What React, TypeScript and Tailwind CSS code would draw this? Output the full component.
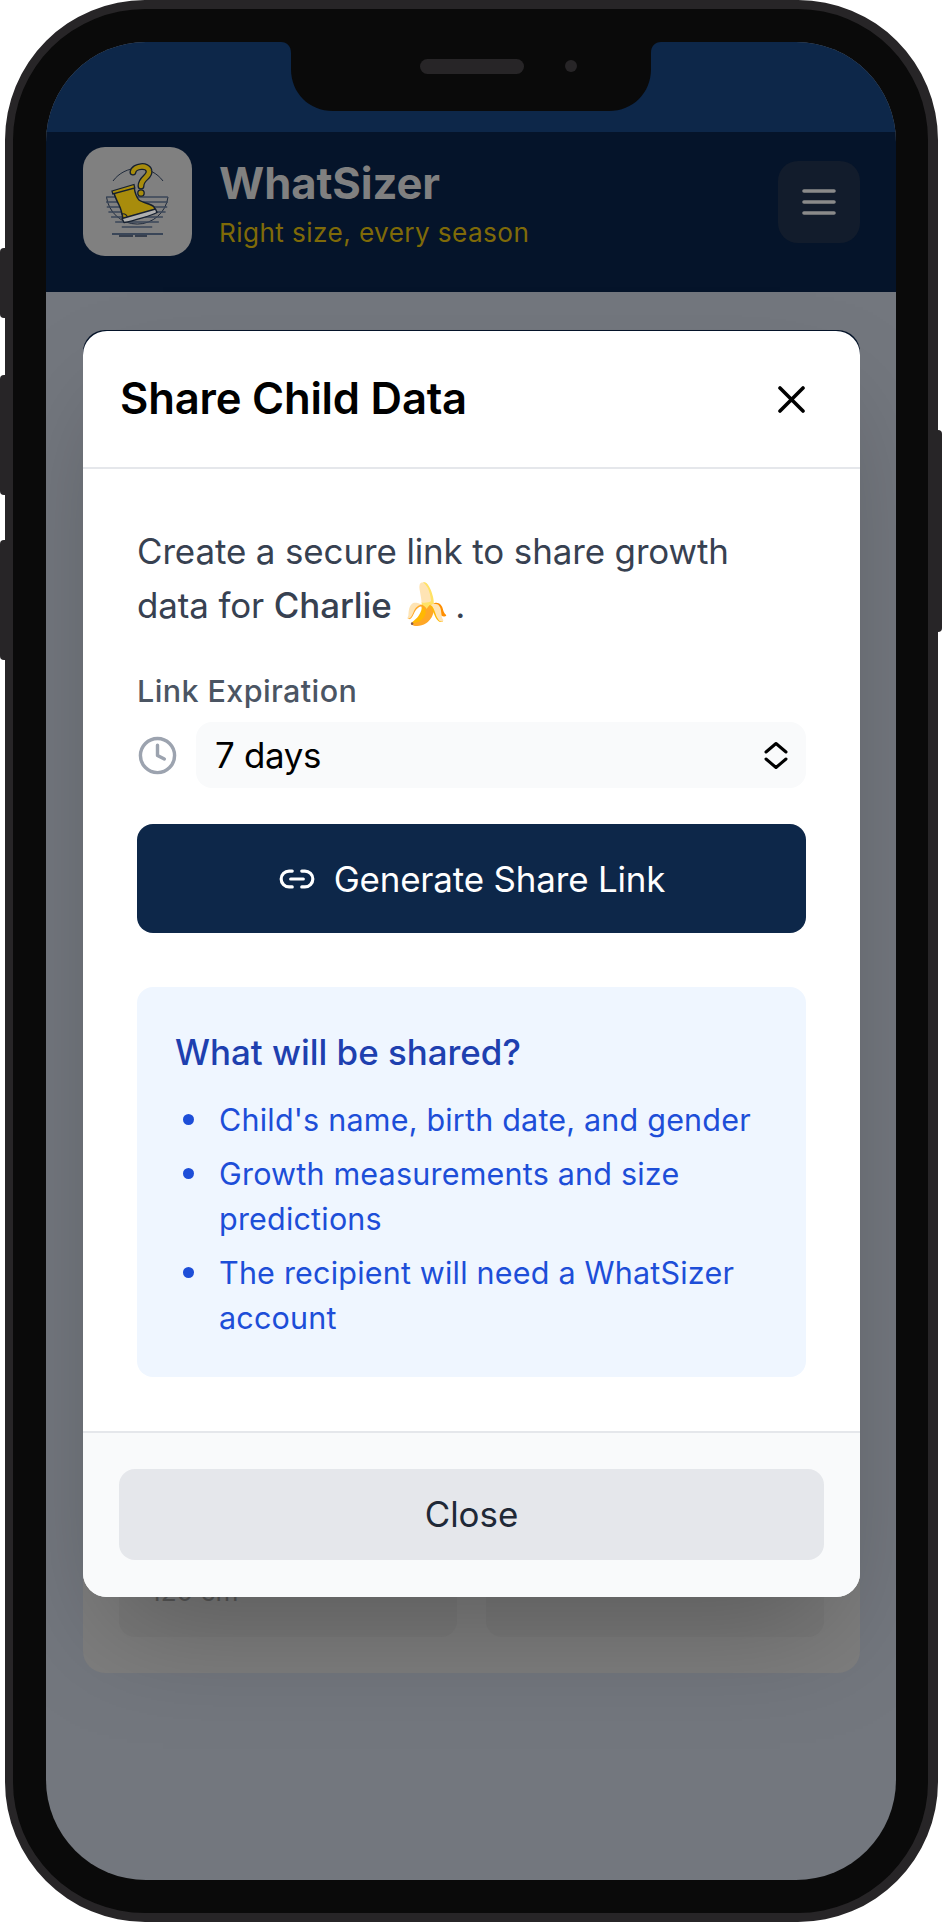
import React from 'react';
import { Clock, Link2 } from 'lucide-react';

const BootLogo = () => (
  <svg viewBox="0 0 109 109" className="w-[109px] h-[109px]" fill="none">
    <path d="M30 34A31 31 0 0 1 80 34" stroke="#1f2a3c" strokeWidth="1" />
    <path d="M23.5 50A31 31 0 0 0 85 50" stroke="#1f2a3c" strokeWidth="1" />
    {[50, 55, 60, 65, 70, 75, 80].map(y => {
      const half = Math.sqrt(Math.max(31 * 31 - (y - 53) * (y - 53), 0));
      return <path key={y} d={`M${54 - half} ${y}H${54 + half}`} stroke="#3a4658" strokeWidth="1.6" />;
    })}
    <path d="M29 87h51" stroke="#3a4658" strokeWidth="2" />
    <path d="M36 89h14M52 89h12" stroke="#1f2a3c" strokeWidth="1.4" />
    <path
      d="M31 46L51 40C52 46 53 50 56 53C60 56 69 57 71 60C72 61 72 62 72 63L40 72C39 66 38 62 36 58C34 54 32 50 31 46Z"
      fill="#a88c0c"
      stroke="#16202f"
      strokeWidth="1.5"
      strokeLinejoin="round"
    />
    <path d="M29 44l22-6.500 .8 3.500-22 6z" fill="#a88c0c" stroke="#16202f" strokeWidth="1.3" />
    <path d="M38 67c4-1 6 1 7 4" stroke="#16202f" strokeWidth="1.2" />
    <path d="M39 71.500L72.500 62L74 65.500C70 68 50 74 41 75.500Z" fill="#b0b0b0" stroke="#16202f" strokeWidth="1.4" strokeLinejoin="round" />
    <path d="M50 25c1-6 15-8 16-1 1 6-8 7-8 15" stroke="#16202f" strokeWidth="7" strokeLinecap="round" />
    <path d="M50 25c1-6 15-8 16-1 1 6-8 7-8 15" stroke="#a88c0c" strokeWidth="4.4" strokeLinecap="round" />
    <circle cx="58" cy="46" r="3.2" fill="#a88c0c" stroke="#16202f" strokeWidth="1.3" />
  </svg>
);

const Hamburger = () => (
  <svg viewBox="0 0 34 26" className="w-[34px] h-[26px]" fill="none" stroke="#8a8a8a" strokeWidth="3.6" strokeLinecap="round">
    <path d="M2 2h30M2 13h30M2 24h30" />
  </svg>
);

const Notch = () => (
  <svg viewBox="0 0 380 69" className="absolute left-[268px] top-[33px] w-[380px] h-[69px]">
    <path d="M0 0C6 0 10 4 10 11V27C10 51 28 69 52 69H328C352 69 370 51 370 27V11C370 4 374 0 380 0Z" fill="#0a0a0a" />
    <rect x="139" y="17" width="104" height="15" rx="7.5" fill="#272527" />
    <circle cx="290" cy="24" r="6" fill="#272527" />
  </svg>
);

const shared = [
  "Child's name, birth date, and gender",
  'Growth measurements and size predictions',
  'The recipient will need a WhatSizer account',
];

export default function App() {
  return (
    <div className="relative w-[942px] h-[1923px] bg-white font-['Inter',sans-serif] overflow-hidden">
      <div className="absolute left-0 top-[248px] w-[8px] h-[70px] rounded-l-[4px] bg-[#272527]" />
      <div className="absolute left-0 top-[375px] w-[8px] h-[120px] rounded-l-[4px] bg-[#272527]" />
      <div className="absolute left-0 top-[540px] w-[8px] h-[120px] rounded-l-[4px] bg-[#272527]" />
      <div className="absolute right-0 top-[430px] w-[8px] h-[202px] rounded-r-[4px] bg-[#272527]" />

      <div className="relative ml-[5px] w-[933px] h-[1922px] rounded-[140px] border-l-[8px] border-r-[10px] border-y-[9px] border-[#272527] bg-[#0a0a0a] pl-[33px] pr-[32px] py-[33px]">
        <div className="relative h-full rounded-[100px] overflow-hidden flex flex-col bg-[#73777e]">
          <div className="h-[90px] shrink-0 bg-[#0d2749]" />
          <header className="h-[160px] shrink-0 bg-[#05142a] flex items-center justify-between pl-[37px] pr-[36px] pb-[21px]">
            <div className="flex items-center gap-[27px]">
              <div className="w-[109px] h-[109px] rounded-[22px] bg-[#808080] overflow-hidden">
                <BootLogo />
              </div>
              <div className="mt-[5px]">
                <div className="text-[43.6px] leading-[50px] font-bold tracking-[-0.1px] text-[#808080]">WhatSizer</div>
                <div className="text-[26.2px] leading-[32px] tracking-[0.4px] text-[#7f6a08] mt-[8px]">Right size, every season</div>
              </div>
            </div>
            <button className="w-[82px] h-[82px] rounded-[20px] bg-[#121c2c] flex items-center justify-center">
              <Hamburger />
            </button>
          </header>

          <main className="flex-1 pl-[37px] pr-[36px] pt-[38px]">
            <div className="h-[1343px] rounded-[22px] bg-[#7e7e7e] overflow-hidden flex flex-col justify-between">
              <div className="h-[40px] bg-[#05142a]" />
              <div className="grid grid-cols-2 gap-[29px] px-[36px] pb-[36px]">
                <div className="h-[100px] rounded-[16px] bg-[#7a7a7a] flex items-end pl-[31px] pb-[29px] text-[26.2px] leading-[32px] text-[#555555]">120 cm</div>
                <div className="h-[100px] rounded-[16px] bg-[#7a7a7a]" />
              </div>
            </div>
          </main>

          {/* share dialog */}
          <div className="absolute left-[37px] top-[289px] w-[777px] rounded-[24px] bg-white overflow-hidden shadow-[0_54px_109px_-26px_rgba(0,0,0,0.25)]">
            <div className="h-[138px] flex items-center justify-between pl-[37px] pr-[55px] border-b-[2px] border-[#e5e7eb]">
              <h2 className="text-[43.6px] font-semibold tracking-[-0.2px] text-black">Share Child Data</h2>
              <svg viewBox="0 0 27 27" className="w-[27px] h-[27px]" fill="none" stroke="#000" strokeWidth="3.6" strokeLinecap="round">
                <path d="M2 2l23 23M25 2L2 25" />
              </svg>
            </div>

            <div className="px-[54px] pt-[55px] pb-[54px]">
              <p className="text-[34.9px] leading-[54px] tracking-[-0.1px] text-[#374151]">
                Create a secure link to share growth data for <span className="font-medium">Charlie</span>{' '}
                <span className="text-[40px] leading-none">🍌</span>
                <span className="ml-[4px]">.</span>
              </p>

              <div className="mt-[39px] text-[30.5px] leading-[40px] font-medium tracking-[0.4px] text-[#4b5563]">Link Expiration</div>
              <div className="mt-[11px] flex items-center gap-[18px]">
                <Clock className="w-[41px] h-[41px] text-[#9ca3af] shrink-0" strokeWidth={2} />
                <div className="flex-1 h-[66px] rounded-[16px] bg-[#f9fafb] flex items-center justify-between pl-[19px] pr-[18px]">
                  <span className="text-[34.9px] tracking-[-0.3px] text-black">7 days</span>
                  <svg viewBox="0 0 24 27" className="w-[24px] h-[27px]" fill="none" stroke="#000" strokeWidth="3" strokeLinecap="round" strokeLinejoin="round">
                    <path d="M2 10l10-8.5L22 10M2 17l10 8.5L22 17" />
                  </svg>
                </div>
              </div>

              <button className="mt-[36px] w-full h-[109px] rounded-[16px] bg-[#0d2749] flex items-center justify-center gap-[18px] text-white text-[34.9px] tracking-[-0.15px]">
                <Link2 className="w-[38px] h-[38px]" strokeWidth={2} />
                <span className="mt-[1px]">Generate Share Link</span>
              </button>

              <div className="mt-[54px] rounded-[16px] bg-[#eff6ff] pl-[38px] pr-[30px] pt-[43px] pb-[37px]">
                <h3 className="text-[34.9px] leading-[44px] font-medium text-[#1e40af]">What will be shared?</h3>
                <ul className="mt-[23px] flex flex-col gap-[9px]">
                  {shared.map(item => (
                    <li key={item} className="flex text-[30.5px] leading-[45px] tracking-[0.2px] text-[#1d4ed8]">
                      <span className="w-[44px] shrink-0 flex justify-start pt-[17px] pl-[8px]">
                        <span className="w-[11px] h-[11px] rounded-full bg-[#1d4ed8]" />
                      </span>
                      <span>{item}</span>
                    </li>
                  ))}
                </ul>
              </div>
            </div>

            <div className="border-t-[2px] border-[#e5e7eb] bg-[#f9fafb] pl-[36px] pr-[36px] pt-[36px] pb-[37px]">
              <button className="w-full h-[91px] rounded-[16px] bg-[#e5e7eb] text-[34.9px] text-[#1f2937]">Close</button>
            </div>
          </div>
        </div>
        <Notch />
      </div>
    </div>
  );
}
